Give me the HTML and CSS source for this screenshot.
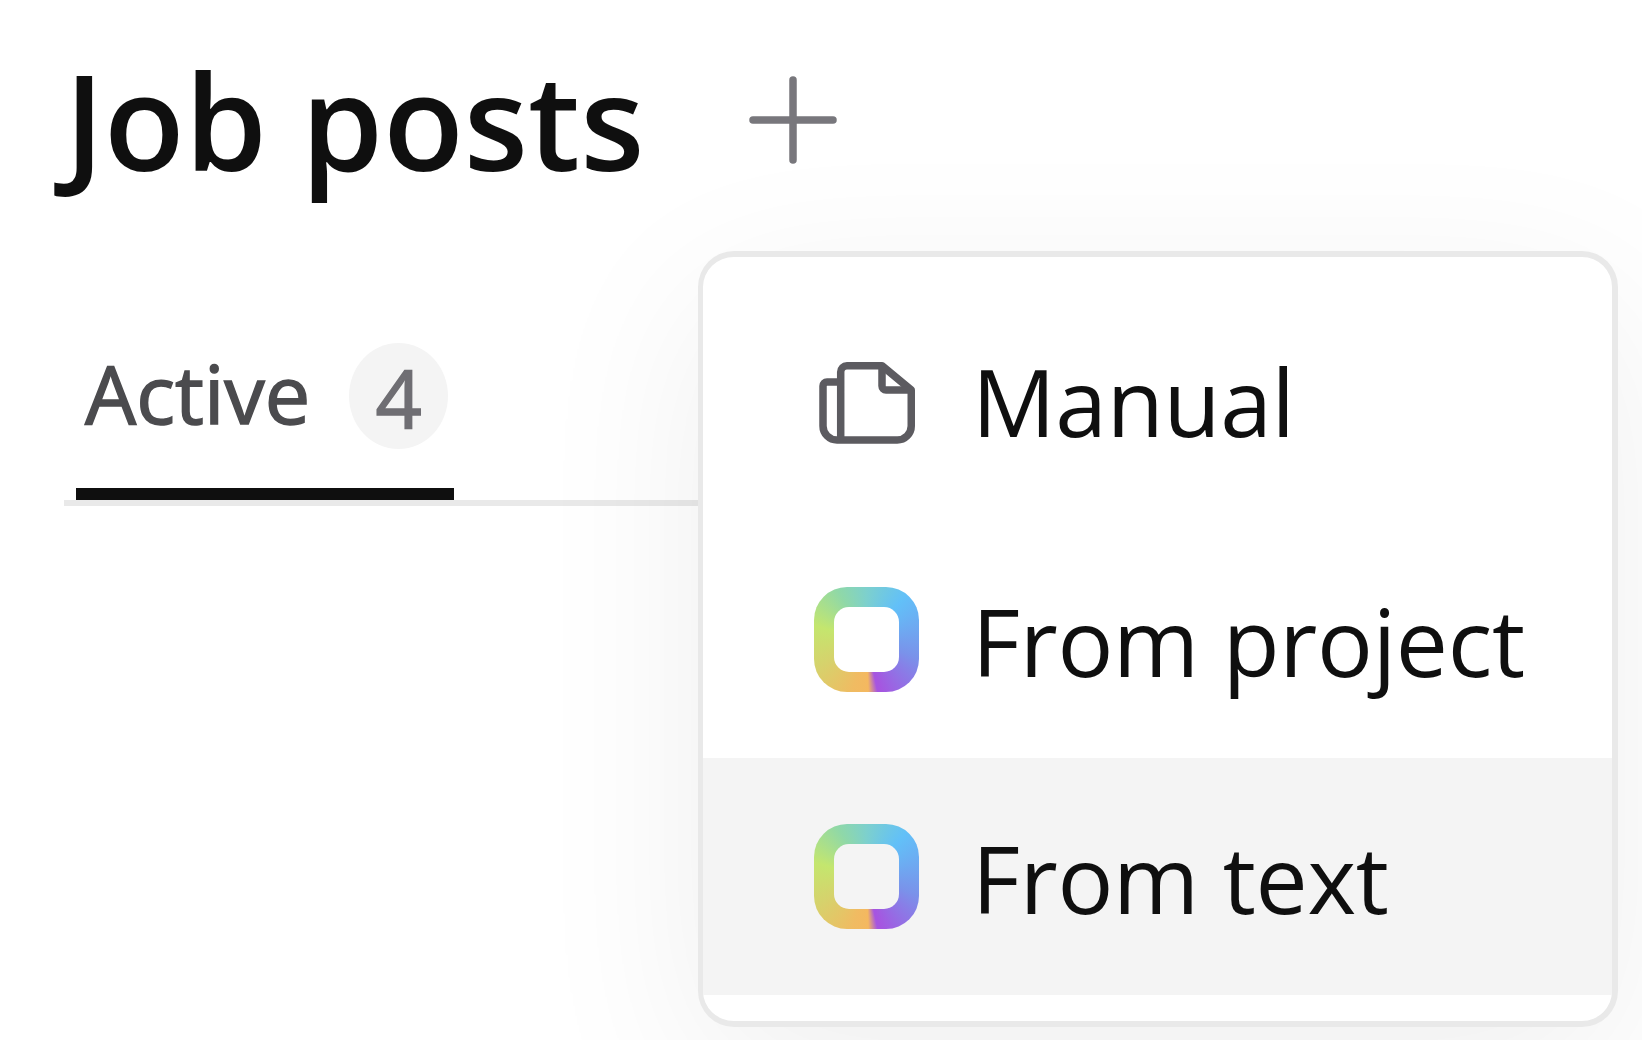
FILE: index.html
```html
<!DOCTYPE html>
<html lang="en">
<head>
<meta charset="utf-8">
<title>Job posts</title>
<link rel="stylesheet" href="styles.css">
</head>
<body>
<main class="page">
  <header class="header">
    <h1 class="title">Job posts</h1>
    <button class="add" type="button" aria-label="Add job post">
      <svg class="add-icon" viewBox="0 0 88 88" aria-hidden="true"><path d="M44 4V84M4 44H84"/></svg>
    </button>
  </header>
  <nav class="tabs">
    <a class="tab">
      <span class="tab-label">Active</span>
      <span class="badge">4</span>
    </a>
    <div class="tab-fade"></div>
  </nav>
  <section class="menu">
    <div class="menu-item menu-item-first">
      <span class="icon-box">
        <svg class="doc-icon" viewBox="0 0 96 82" aria-hidden="true">
          <path d="M21.7 78V10a6.25 6.25 0 0 1 6.25-6.25H63L92.25 28V64a14 14 0 0 1-14 14H18a14 14 0 0 1-14-14V24a4 4 0 0 1 4-4H21.7"/>
          <path d="M63 3.75V24a4 4 0 0 0 4 4H92.25"/>
        </svg>
      </span>
      <span class="menu-label">Manual</span>
    </div>
    <div class="menu-item">
      <span class="icon-box"><span class="ring"><span class="ring-hole"></span></span></span>
      <span class="menu-label">From project</span>
    </div>
    <div class="menu-item menu-item-active">
      <span class="icon-box"><span class="ring"><span class="ring-hole"></span></span></span>
      <span class="menu-label">From text</span>
    </div>
  </section>
</main>
</body>
</html>
```
FILE: styles.css
```css
* { box-sizing: border-box; }
html, body { margin: 0; height: 100%; background: #fff; overflow: hidden; }
body { font-family: "Open Sans", "Noto Sans", sans-serif; color: #0f0f0f; }
.page { position: relative; width: 1642px; height: 1040px; padding: 40px 0 0 64px; overflow: hidden; }

.header { display: flex; align-items: center; height: 160px; gap: 104px; }
.title { margin: 0 0 0 0.5px; font-size: 132px; font-weight: 600; line-height: 160px; letter-spacing: 0; color: #0f0f0f; white-space: nowrap; }
.add { display: block; width: 88px; height: 88px; padding: 0; border: 0; background: none; }
.add-icon { display: block; width: 88px; height: 88px; fill: none; stroke: #78777c; stroke-width: 7.5; stroke-linecap: round; }

.tabs { position: relative; display: flex; width: 1000px; margin-top: 125px; padding-left: 12px; border-bottom: 6px solid #e9e9e9; }
.tab { display: flex; align-items: center; gap: 39px; width: 378px; height: 175px; padding: 0 6px 28px 9px; border-bottom: 12px solid #0f0f0f; }
.tab-label { font-size: 81px; line-height: 106px; color: #4b4b4e; -webkit-text-stroke: 1.5px #4b4b4e; }
.badge { display: flex; align-items: center; justify-content: center; width: 99px; height: 106px; margin-top: 7px; border-radius: 50%; background: #f4f4f4; color: #6f6e73; font-size: 81px; line-height: 1; -webkit-text-stroke: 1.5px #6f6e73; }
.tab-fade { position: absolute; left: 466px; top: 20px; width: 168px; height: 108px; background: linear-gradient(to right, rgba(255,255,255,0), rgba(255,255,255,.45)); }

.menu { position: absolute; left: 698px; top: 251px; width: 920px; height: 776px; padding: 27px 0; background: #fff; border: 6px solid #e9e9e9; border-left-width: 5px; border-radius: 36px; box-shadow: 0 48px 180px rgba(0,0,0,.065); z-index: 2; }
.menu-item { display: flex; align-items: center; height: 237px; padding-left: 111px; gap: 53px; --row-bg: #fff; }
.menu-item-active { background: #f4f4f4; --row-bg: #f4f4f4; }
.menu-label { padding-top: 3px; font-size: 93px; line-height: 120px; color: #0f0f0f; white-space: nowrap; letter-spacing: -0.3px; }
.menu-item-first .menu-label { padding-top: 0; padding-bottom: 4px; }
.icon-box { display: flex; align-items: center; justify-content: center; width: 105px; height: 105px; flex: none; }
.doc-icon { display: block; width: 96px; height: 82px; fill: none; stroke: #5c5b60; stroke-width: 7.5; stroke-linejoin: round; }
.ring { display: flex; align-items: center; justify-content: center; width: 105px; height: 105px; border-radius: 33px; background: conic-gradient(from 0deg, #7dd0cd 0deg, #62c0f8 42deg, #7a92ea 110deg, #a655e0 165deg, #a655e0 168deg, #f4b860 178deg, #f0bb62 195deg, #d6d26c 240deg, #c4e66e 285deg, #8fd8a8 330deg, #7dd0cd 360deg); }
.ring-hole { display: block; width: 65px; height: 65px; border-radius: 15px; background: var(--row-bg); }
```
